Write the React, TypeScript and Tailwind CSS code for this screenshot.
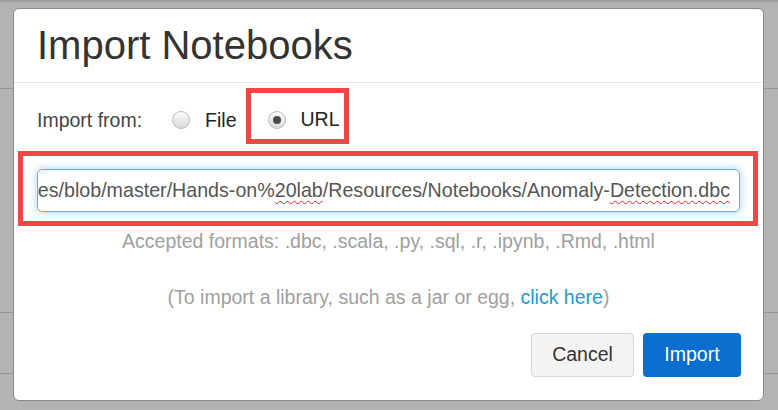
import React from "react";

const font = { fontFamily: '"Liberation Sans", Arial, sans-serif' };

function Radio({ checked }: { checked?: boolean }) {
  return (
    <span className="flex h-[18px] w-[18px] items-center justify-center rounded-full border border-[#b9b9b9] bg-gradient-to-b from-[#fbfbfb] to-[#d9d9d9] shadow-[inset_0_1px_1px_rgba(255,255,255,0.8)]">
      {checked && <span className="h-[8px] w-[8px] rounded-full bg-[#4a4a4a]" />}
    </span>
  );
}

export default function App() {
  return (
    <div className="relative h-[410px] w-[778px] overflow-hidden bg-[#b3b3b3]" style={font}>
      {/* page behind the dialog */}
      <div className="flex flex-col">
        <div className="h-[2px] bg-[#9d9d9d]" />
        <div className="h-[86px]" />
        <div className="h-px bg-[#969696]" />
        <div className="h-[223px]" />
        <div className="h-px bg-[#969696]" />
        <div className="h-[60px]" />
        <div className="h-px bg-[#969696]" />
      </div>

      {/* dialog */}
      <div className="absolute left-[13px] top-[8px] flex h-[393px] w-[751px] flex-col rounded-[6px] border border-[#8a8a8a] bg-white">
        <div className="border-b border-[#e6e6e6] pb-[15px] pl-[23px] pt-[14px]">
          <h1 className="text-[40px] leading-[44px] text-[#333]">Import Notebooks</h1>
        </div>

        <div className="mt-[5px] flex items-center text-[19.5px] text-[#333]">
          <span className="ml-[23px] mt-[10px] text-[#444]">Import from:</span>
          <span className="ml-[30px] mt-[8px]">
            <Radio />
          </span>
          <span className="ml-[15px] mt-[10px] text-[#222]">File</span>
          <div className="ml-[9px] flex h-[56px] w-[103px] items-center border-[5px] border-[#f24545] pl-[17px] pt-[8px]">
            <Radio checked />
            <span className="ml-[15px] text-[#222]">URL</span>
          </div>
        </div>

        <div className="ml-[4px] mt-[7px] h-[75px] w-[740px] border-[5px] border-[#f24545] pb-[9px] pl-[14px] pr-[13px] pt-[13px]">
          <div className="flex h-[43px] items-center justify-end overflow-hidden rounded-[5px] border border-[#66afe9] pr-[9px] shadow-[inset_0_1px_1px_rgba(0,0,0,0.075),0_0_8px_rgba(102,175,233,0.6)]">
            <span className="whitespace-nowrap text-[19.65px] text-[#555]">
              https://github.com/Azure/MachineLearningSamples/tree/master/NotebookSamples/blob/master/Hands-on%
              <span className="underline decoration-[#e22] decoration-wavy decoration-1 underline-offset-[3px]">20lab</span>
              /Resources/Notebooks/Anomaly-
              <span className="underline decoration-[#e22] decoration-wavy decoration-1 underline-offset-[3px]">Detection.dbc</span>
            </span>
          </div>
        </div>

        <p className="mt-[1px] text-center text-[19.5px] leading-[28px] text-[#a0a0a0]">
          Accepted formats: .dbc, .scala, .py, .sql, .r, .ipynb, .Rmd, .html
        </p>
        <p className="mt-[28px] text-center text-[19.5px] leading-[28px] text-[#a0a0a0]">
          (To import a library, such as a jar or egg, <span className="text-[#1b9bd1]">click here</span>)
        </p>

        <div className="mt-[22px] flex justify-end gap-[9px] pr-[22px]">
          <button className="h-[44px] w-[103px] rounded-[4px] border border-[#d6d6d6] bg-[#f3f3f3] text-[19.5px] text-[#333]">
            Cancel
          </button>
          <button className="h-[44px] w-[98px] rounded-[4px] bg-[#0a6ece] text-[19.5px] text-white">
            Import
          </button>
        </div>
      </div>
    </div>
  );
}
